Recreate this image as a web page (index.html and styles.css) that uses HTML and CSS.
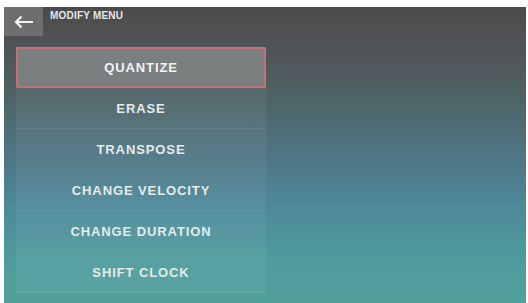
FILE: index.html
```html
<!DOCTYPE html>
<html>
<head>
<meta charset="utf-8">
<link rel="stylesheet" href="styles.css">
</head>
<body>
<div class="screen">
  <div class="header">
    <div class="back">
      <svg width="22" height="14" viewBox="0 0 22 14"><path d="M20 7H3M8.5 1.5L3 7l5.5 5.5" fill="none" stroke="#f2f2f2" stroke-width="2.2"/></svg>
    </div>
    <div class="title">MODIFY MENU</div>
  </div>
  <div class="menu">
    <div class="item selected">QUANTIZE</div>
    <div class="item">ERASE</div>
    <div class="item">TRANSPOSE</div>
    <div class="item">CHANGE VELOCITY</div>
    <div class="item">CHANGE DURATION</div>
    <div class="item">SHIFT CLOCK</div>
  </div>
</div>
</body>
</html>
```
FILE: styles.css
```css
html, body { margin: 0; padding: 0; background: #fff; }
body { width: 528px; height: 303px; padding: 7px 2px 0 4px; box-sizing: border-box; }
.screen {
  width: 522px; height: 296px;
  background: linear-gradient(180deg, #4c4c4e 0%, #505658 18%, #4e686c 35%, #4e7a8a 55%, #4d8a9a 68%, #4f9a9c 84%, #52a19c 100%);
  font-family: "Liberation Sans", Arial, sans-serif;
  color: #e4ebeb;
  display: flex; flex-direction: column;
}
.header { display: flex; height: 29px; background: linear-gradient(180deg, #4a4a4b, #525354); }
.back { width: 39px; height: 29px; background: #6e6e6f; display: flex; align-items: center; justify-content: center; }
.title { font-size: 10px; font-weight: bold; padding: 3px 0 0 7px; letter-spacing: 0.2px; color: #e6e6e6; }
.menu {
  margin: 11px 0 0 12px; width: 250px;
  background: rgba(255,255,255,0.05);
  display: flex; flex-direction: column;
}
.item {
  height: 41px; box-sizing: border-box;
  display: flex; align-items: center; justify-content: center;
  font-size: 13px; font-weight: bold; letter-spacing: 0.9px;
  border-bottom: 1px solid rgba(255,255,255,0.07);
}
.item.selected { background: #7b7f80; border: 2px solid #c4707c; border-radius: 1px; color: #f2f4f4; }
```
